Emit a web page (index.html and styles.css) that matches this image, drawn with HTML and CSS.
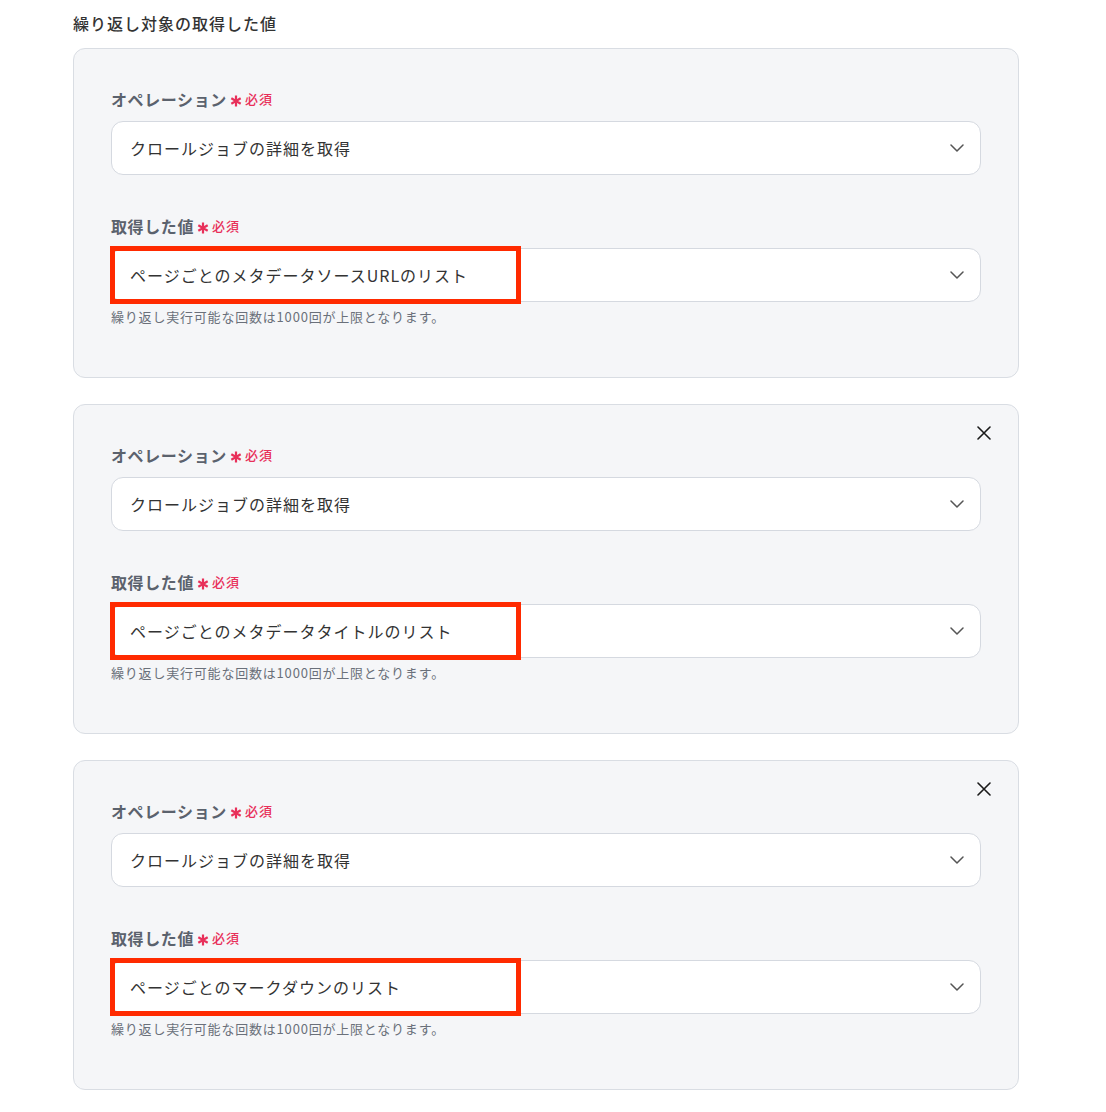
FILE: index.html
```html
<!DOCTYPE html>
<html lang="ja">
<head>
<meta charset="utf-8">
<link rel="stylesheet" href="styles.css">
</head>
<body>
<div class="page">
  <h2 class="title">繰り返し対象の取得した値</h2>

  <div class="card">
    <div class="field">
      <div class="label">オペレーション<span class="req"><svg class="ast" width="12" height="12" viewBox="0 0 12 12"><path d="M6 0.6v10.8M1.32 3.3l9.36 5.4M10.68 3.3l-9.36 5.4" stroke="#e8305a" stroke-width="2.2" fill="none"/></svg>必須</span></div>
      <div class="select">
        <span class="value">クロールジョブの詳細を取得</span>
        <svg class="chev" width="14" height="8" viewBox="0 0 14 8"><path d="M1 1l6 6 6-6" fill="none" stroke="#555" stroke-width="1.5" stroke-linecap="round" stroke-linejoin="round"/></svg>
      </div>
    </div>
    <div class="field">
      <div class="label">取得した値<span class="req"><svg class="ast" width="12" height="12" viewBox="0 0 12 12"><path d="M6 0.6v10.8M1.32 3.3l9.36 5.4M10.68 3.3l-9.36 5.4" stroke="#e8305a" stroke-width="2.2" fill="none"/></svg>必須</span></div>
      <div class="select">
        <span class="value">ページごとのメタデータソースURLのリスト</span>
        <svg class="chev" width="14" height="8" viewBox="0 0 14 8"><path d="M1 1l6 6 6-6" fill="none" stroke="#555" stroke-width="1.5" stroke-linecap="round" stroke-linejoin="round"/></svg>
        <div class="highlight"></div>
      </div>
      <p class="hint">繰り返し実行可能な回数は1000回が上限となります。</p>
    </div>
  </div>

  <div class="card">
    <svg class="close" width="14" height="14" viewBox="0 0 14 14"><path d="M1 1l12 12M13 1L1 13" fill="none" stroke="#1a1a1a" stroke-width="1.6" stroke-linecap="round"/></svg>
    <div class="field">
      <div class="label">オペレーション<span class="req"><svg class="ast" width="12" height="12" viewBox="0 0 12 12"><path d="M6 0.6v10.8M1.32 3.3l9.36 5.4M10.68 3.3l-9.36 5.4" stroke="#e8305a" stroke-width="2.2" fill="none"/></svg>必須</span></div>
      <div class="select">
        <span class="value">クロールジョブの詳細を取得</span>
        <svg class="chev" width="14" height="8" viewBox="0 0 14 8"><path d="M1 1l6 6 6-6" fill="none" stroke="#555" stroke-width="1.5" stroke-linecap="round" stroke-linejoin="round"/></svg>
      </div>
    </div>
    <div class="field">
      <div class="label">取得した値<span class="req"><svg class="ast" width="12" height="12" viewBox="0 0 12 12"><path d="M6 0.6v10.8M1.32 3.3l9.36 5.4M10.68 3.3l-9.36 5.4" stroke="#e8305a" stroke-width="2.2" fill="none"/></svg>必須</span></div>
      <div class="select">
        <span class="value">ページごとのメタデータタイトルのリスト</span>
        <svg class="chev" width="14" height="8" viewBox="0 0 14 8"><path d="M1 1l6 6 6-6" fill="none" stroke="#555" stroke-width="1.5" stroke-linecap="round" stroke-linejoin="round"/></svg>
        <div class="highlight"></div>
      </div>
      <p class="hint">繰り返し実行可能な回数は1000回が上限となります。</p>
    </div>
  </div>

  <div class="card">
    <svg class="close" width="14" height="14" viewBox="0 0 14 14"><path d="M1 1l12 12M13 1L1 13" fill="none" stroke="#1a1a1a" stroke-width="1.6" stroke-linecap="round"/></svg>
    <div class="field">
      <div class="label">オペレーション<span class="req"><svg class="ast" width="12" height="12" viewBox="0 0 12 12"><path d="M6 0.6v10.8M1.32 3.3l9.36 5.4M10.68 3.3l-9.36 5.4" stroke="#e8305a" stroke-width="2.2" fill="none"/></svg>必須</span></div>
      <div class="select">
        <span class="value">クロールジョブの詳細を取得</span>
        <svg class="chev" width="14" height="8" viewBox="0 0 14 8"><path d="M1 1l6 6 6-6" fill="none" stroke="#555" stroke-width="1.5" stroke-linecap="round" stroke-linejoin="round"/></svg>
      </div>
    </div>
    <div class="field">
      <div class="label">取得した値<span class="req"><svg class="ast" width="12" height="12" viewBox="0 0 12 12"><path d="M6 0.6v10.8M1.32 3.3l9.36 5.4M10.68 3.3l-9.36 5.4" stroke="#e8305a" stroke-width="2.2" fill="none"/></svg>必須</span></div>
      <div class="select">
        <span class="value">ページごとのマークダウンのリスト</span>
        <svg class="chev" width="14" height="8" viewBox="0 0 14 8"><path d="M1 1l6 6 6-6" fill="none" stroke="#555" stroke-width="1.5" stroke-linecap="round" stroke-linejoin="round"/></svg>
        <div class="highlight"></div>
      </div>
      <p class="hint">繰り返し実行可能な回数は1000回が上限となります。</p>
    </div>
  </div>
</div>
</body>
</html>
```

FILE: styles.css
```css
* { box-sizing: border-box; }

body {
  margin: 0;
  background: #ffffff;
  font-family: "Noto Sans CJK JP", "Noto Sans", sans-serif;
  color: #333333;
}

.page {
  width: 946px;
  margin-left: 73px;
  padding-top: 11px;
  display: flex;
  flex-direction: column;
  gap: 26px;
}

.title {
  margin: 0 0 -13px 0;
  font-size: 16px;
  line-height: 24px;
  font-weight: 500;
  letter-spacing: 1px;
  color: #333333;
}

.card {
  position: relative;
  background: #f5f6f8;
  border: 1px solid #d9dde3;
  border-radius: 12px;
  padding: 38px 37px 51px 37px;
  display: flex;
  flex-direction: column;
  gap: 39px;
}

.close {
  position: absolute;
  top: 21px;
  right: 27px;
}

.field {
  display: flex;
  flex-direction: column;
}

.label {
  display: flex;
  align-items: center;
  font-size: 16px;
  line-height: 24px;
  font-weight: 700;
  letter-spacing: 0.6px;
  color: #5b626d;
  margin-bottom: 10px;
}

.req {
  display: inline-flex;
  align-items: center;
  margin-left: 3px;
  font-size: 13px;
  font-weight: 500;
  letter-spacing: 1px;
  color: #e8305a;
}

.ast {
  margin-right: 3px;
  position: relative;
  top: 2px;
}

.select {
  position: relative;
  height: 54px;
  background: #ffffff;
  border: 1px solid #d5d9e0;
  border-radius: 12px;
  display: flex;
  align-items: center;
  justify-content: space-between;
  padding: 0 16px 0 18px;
}

.value {
  font-size: 16px;
  letter-spacing: 1px;
  color: #333333;
}

.highlight {
  position: absolute;
  left: -2px;
  top: -3px;
  width: 411px;
  height: 58px;
  border: 5px solid #ff2a00;
  pointer-events: none;
}

.hint {
  margin: 6px 0 0 0;
  font-size: 13px;
  line-height: 18px;
  letter-spacing: 0.8px;
  color: #6a707a;
}
```
